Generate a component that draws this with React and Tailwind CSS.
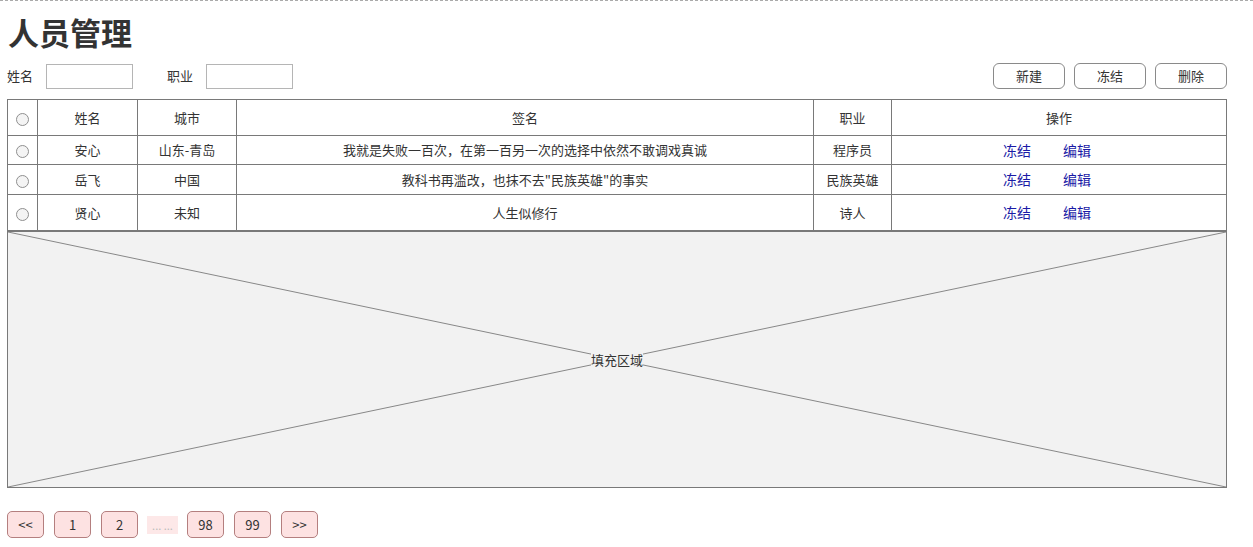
// 人员管理 — staff list wireframe (search, table, placeholder area, pager)
import React from 'react';

const ROWS = [
  { name: '安心', city: '山东-青岛', sign: '我就是失败一百次，在第一百另一次的选择中依然不敢调戏真诚', job: '程序员', h: 'h-[29px]' },
  { name: '岳飞', city: '中国', sign: '教科书再滥改，也抹不去"民族英雄"的事实', job: '民族英雄', h: 'h-[30px]' },
  { name: '贤心', city: '未知', sign: '人生似修行', job: '诗人', h: 'h-[36px]' },
];

const PAGES = ['<<', '1', '2', null, '98', '99', '>>'];

function Radio() {
  return <span className="inline-block w-[13px] h-[13px] rounded-full border border-[#8f8f8f] bg-[#f4f4f4] align-middle" />;
}

function Cell({ children, className = '' }) {
  return <td className={`border border-[#797979] text-center p-0 ${className}`}>{children}</td>;
}

export default function App() {
  return (
    <div className="w-[1253px] h-[547px] bg-white text-[#333] border-t border-dashed border-[#aaa] overflow-hidden"
      style={{ fontFamily: '"Noto Sans CJK SC", "Noto Sans", sans-serif' }}>
      <h1 className="text-[31px] font-bold leading-none text-[#333] ml-[8px] mt-[15px] h-[47px]">人员管理</h1>

      {/* Search bar + actions */}
      <div className="flex items-center h-[26px] text-[13px] pr-[26px]">
        <span className="ml-[7px] w-[39px]">姓名</span>
        <input className="w-[87px] h-[25px] border border-[#b5b5b5] outline-none" />
        <span className="ml-[34px] w-[39px]">职业</span>
        <input className="w-[87px] h-[25px] border border-[#b5b5b5] outline-none" />
        <div className="ml-auto flex gap-[9px]">
          {['新建', '冻结', '删除'].map(b => (
            <button key={b} className="w-[72px] h-[26px] rounded-[6px] border border-[#8a8a8a] bg-white text-[13px] text-[#333]">{b}</button>
          ))}
        </div>
      </div>

      {/* Table */}
      <table className="ml-[7px] mt-[10px] border-collapse w-[1220px] text-[13px] table-fixed">
        <colgroup>
          <col className="w-[30px]" /><col className="w-[100px]" /><col className="w-[99px]" />
          <col className="w-[577px]" /><col className="w-[78px]" /><col />
        </colgroup>
        <thead>
          <tr className="h-[36px]">
            <Cell><Radio /></Cell>
            <Cell>姓名</Cell>
            <Cell>城市</Cell>
            <Cell>签名</Cell>
            <Cell>职业</Cell>
            <Cell>操作</Cell>
          </tr>
        </thead>
        <tbody>
          {ROWS.map(r => (
            <tr key={r.name} className={r.h}>
              <Cell><Radio /></Cell>
              <Cell>{r.name}</Cell>
              <Cell>{r.city}</Cell>
              <Cell>{r.sign}</Cell>
              <Cell>{r.job}</Cell>
              <Cell className="pr-[24px]">
                <span className="inline-flex gap-[32px] text-[14px] text-[#1a1aa6]">
                  <a>冻结</a><a>编辑</a>
                </span>
              </Cell>
            </tr>
          ))}
        </tbody>
      </table>

      {/* Placeholder fill area */}
      <div className="relative ml-[7px] w-[1220px] h-[258px] bg-[#f2f2f2] border border-[#797979] border-t-2 -mt-px flex items-center justify-center text-[13px]">
        <svg className="absolute inset-0 w-full h-full" viewBox="0 0 100 100" preserveAspectRatio="none">
          <line x1="0" y1="0" x2="100" y2="100" stroke="#888" strokeWidth="1" vectorEffect="non-scaling-stroke" />
          <line x1="100" y1="0" x2="0" y2="100" stroke="#888" strokeWidth="1" vectorEffect="non-scaling-stroke" />
        </svg>
        <span className="relative bg-[#f2f2f2] leading-none">填充区域</span>
      </div>

      {/* Pager */}
      <div className="flex items-center gap-[10px] ml-[7px] mt-[23px] text-[13px] text-[#333]">
        {PAGES.map((p, i) => p === null ? (
          <span key={i} className="-mx-px w-[31px] h-[18px] bg-[#fde8e8] text-[#bbb] text-[11px] leading-[18px] text-center">... ...</span>
        ) : (
          <button key={i} className="w-[37px] h-[27px] rounded-[5px] border border-[#b47f7f] bg-[#fde2e2]">{p}</button>
        ))}
      </div>
    </div>
  );
}
